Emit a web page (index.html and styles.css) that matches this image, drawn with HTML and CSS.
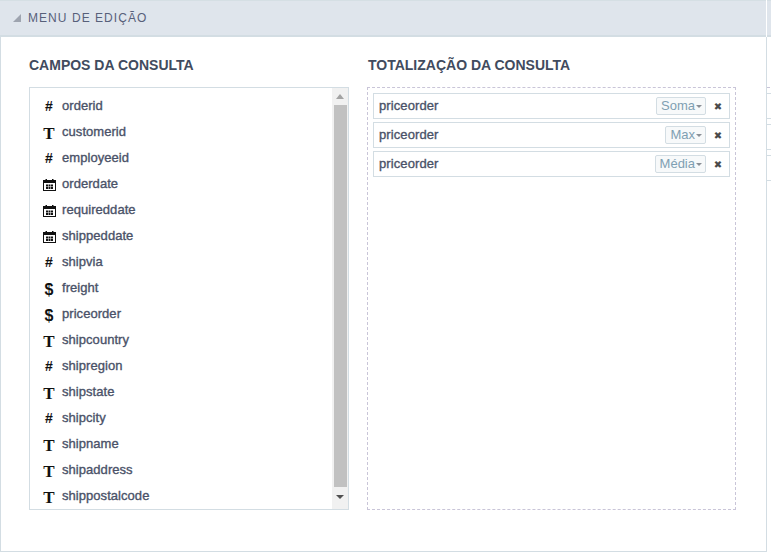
FILE: index.html
```html
<!DOCTYPE html>
<html lang="pt">
<head>
    <meta charset="UTF-8">
    <meta name="viewport" content="width=device-width, initial-scale=1.0">
    <title>Menu de Edição</title>
    <link rel="stylesheet" href="styles.css">
</head>
<body>
    <svg class="sprites" width="0" height="0">
        <symbol id="cal" viewBox="0 0 13 12">
            <path d="M0 1h2.500V0h1.500v1h5V0h1.500v1H13v11H0zM1 4v7h11V4z" fill="#111"/>
            <path d="M3 5.500h2v2H3zM5.500 5.500h2v2h-2zM8 5.500h2v2H8zM3 8h2v2H3zM5.500 8h2v2h-2zM8 8h2v2H8z" fill="#111"/>
        </symbol>
    </svg>

    <!-- Header bar -->
    <div class="menu-bar">
        <div class="menu-title"><span class="corner"></span>MENU DE EDIÇÃO</div>
        <div class="menu-rest"></div>
    </div>

    <div class="stage">
        <div class="panel">
            <!-- Fields -->
            <div class="col col-fields">
                <h2>CAMPOS DA CONSULTA</h2>
                <div class="list-box">
                    <ul class="fields">
                        <li><span class="ico ico-num">#</span>orderid</li>
                        <li><span class="ico ico-text">T</span>customerid</li>
                        <li><span class="ico ico-num">#</span>employeeid</li>
                        <li><svg class="ico-cal"><use href="#cal"/></svg>orderdate</li>
                        <li><svg class="ico-cal"><use href="#cal"/></svg>requireddate</li>
                        <li><svg class="ico-cal"><use href="#cal"/></svg>shippeddate</li>
                        <li><span class="ico ico-num">#</span>shipvia</li>
                        <li><span class="ico ico-money">$</span>freight</li>
                        <li><span class="ico ico-money">$</span>priceorder</li>
                        <li><span class="ico ico-text">T</span>shipcountry</li>
                        <li><span class="ico ico-num">#</span>shipregion</li>
                        <li><span class="ico ico-text">T</span>shipstate</li>
                        <li><span class="ico ico-num">#</span>shipcity</li>
                        <li><span class="ico ico-text">T</span>shipname</li>
                        <li><span class="ico ico-text">T</span>shipaddress</li>
                        <li><span class="ico ico-text">T</span>shippostalcode</li>
                    </ul>
                    <div class="scrollbar">
                        <span class="arrow arrow-up"></span>
                        <span class="thumb"></span>
                        <span class="arrow arrow-down"></span>
                    </div>
                </div>
            </div>

            <!-- Totals -->
            <div class="col col-totals">
                <h2>TOTALIZAÇÃO DA CONSULTA</h2>
                <div class="drop-box">
                    <div class="total-row">
                        <span class="total-name">priceorder</span>
                        <span class="pick">Soma<i class="caret"></i></span>
                        <span class="remove">✖</span>
                    </div>
                    <div class="total-row">
                        <span class="total-name">priceorder</span>
                        <span class="pick">Max<i class="caret"></i></span>
                        <span class="remove">✖</span>
                    </div>
                    <div class="total-row">
                        <span class="total-name">priceorder</span>
                        <span class="pick">Média<i class="caret"></i></span>
                        <span class="remove">✖</span>
                    </div>
                </div>
            </div>
        </div>

        <!-- Start of the next panel, cut off by the window -->
        <div class="next-panel">
            <i class="tick tick-dash"></i>
            <i class="tick tick-a"></i>
            <i class="tick tick-b"></i>
            <i class="tick tick-a"></i>
            <i class="tick tick-b"></i>
            <i class="tick tick-a"></i>
            <i class="tick tick-b"></i>
        </div>
    </div>
</body>
</html>
```

FILE: styles.css
```css
html, body {
    margin: 0;
    padding: 0;
    background: #ffffff;
    overflow: hidden;
}

body {
    width: 771px;
    height: 553px;
    font-family: "Liberation Sans", Arial, sans-serif;
    color: #4a5268;
}

.sprites {
    display: block;
}

.menu-bar {
    display: flex;
    height: 37px;
}

.menu-title {
    display: flex;
    align-items: center;
    width: 766px;
    box-sizing: border-box;
    padding-left: 13px;
    padding-bottom: 1px;
    background: #dfe5ec;
    border-top: 1px solid #d5dfe4;
    border-bottom: 2px solid #d3dde3;
    font-size: 12px;
    letter-spacing: 1.05px;
    color: #57607a;
}

.corner {
    width: 0;
    height: 0;
    margin-right: 7px;
    border-left: 8px solid transparent;
    border-bottom: 8px solid #9ea4af;
}

.menu-rest {
    width: 4px;
    margin-left: 1px;
    background: #dfe5ec;
    border-top: 1px solid #d5dfe4;
    border-bottom: 2px solid #d3dde3;
    box-sizing: border-box;
}

.stage {
    display: flex;
    height: 515px;
}

.panel {
    display: flex;
    width: 767px;
    height: 515px;
    box-sizing: border-box;
    padding-left: 28px;
    gap: 18px;
    border-left: 1px solid #d3dde3;
    border-right: 1px solid #d3dde3;
    border-bottom: 1px solid #d3dde3;
}

.next-panel {
    width: 4px;
    padding-top: 50px;
}

.tick {
    display: block;
    height: 1px;
    background: #d3dde3;
}

.tick-dash {
    background: #c9c5d8;
    width: 3px;
}

.tick-a {
    margin-top: 5px;
}

.tick-b {
    margin-top: 24px;
}

h2 {
    margin: 20px 0 14px;
    height: 16px;
    font-size: 14px;
    line-height: 16px;
    font-weight: bold;
    color: #414b5e;
}

.col-fields {
    width: 320px;
}

.col-totals {
    width: 369px;
}

.col-totals h2 {
    padding-left: 1px;
}

.list-box {
    display: flex;
    height: 423px;
    box-sizing: border-box;
    border: 1px solid #d3dde3;
}

.fields {
    flex: 1;
    margin: 0;
    padding: 5px 0 0;
    list-style: none;
}

.fields li {
    display: flex;
    align-items: center;
    height: 26px;
    box-sizing: border-box;
    padding-bottom: 2px;
    font-size: 13px;
    letter-spacing: 0.05px;
    color: #4a5268;
    -webkit-text-stroke: 0.35px #4a5268;
}

.ico, .ico-cal {
    flex: none;
    color: #111111;
    letter-spacing: 0;
    -webkit-text-stroke: 0;
}

.ico {
    width: 32px;
    box-sizing: border-box;
    padding-left: 6px;
    text-align: center;
}

.ico-num {
    font-size: 14px;
    font-weight: bold;
    line-height: 14px;
    padding-top: 1px;
}

.ico-text {
    font-size: 17px;
    font-family: "Liberation Serif", serif;
    font-weight: bold;
    line-height: 17px;
    padding-top: 4px;
}

.ico-money {
    font-size: 16px;
    font-weight: bold;
    line-height: 16px;
    padding-top: 6px;
}

.ico-cal {
    width: 13px;
    height: 12px;
    margin: 3px 6px 0 13px;
}

.scrollbar {
    display: flex;
    flex-direction: column;
    align-items: center;
    width: 16px;
    background: #f1f1f1;
}

.thumb {
    width: 13px;
    height: 382px;
    background: #c1c1c1;
}

.arrow {
    width: 0;
    height: 0;
    border-left: 4px solid transparent;
    border-right: 4px solid transparent;
}

.arrow-up {
    margin: 6px 0 6px;
    border-bottom: 5px solid #a3a3a3;
}

.arrow-down {
    margin-top: 8px;
    border-top: 4px solid #505050;
}

.drop-box {
    height: 423px;
    box-sizing: border-box;
    padding: 5px;
    border: 1px dashed #c9c5d8;
}

.total-row {
    display: flex;
    align-items: center;
    height: 26px;
    margin-bottom: 3px;
    box-sizing: border-box;
    padding: 0 6px 0 5px;
    border: 1px solid #d3dde3;
    font-size: 13px;
    color: #4a5268;
}

.total-name {
    flex: 1;
    padding-bottom: 2px;
    letter-spacing: 0.1px;
    -webkit-text-stroke: 0.35px #4a5268;
}

.pick {
    display: flex;
    align-items: center;
    height: 18px;
    box-sizing: border-box;
    padding: 0 3px 2px 4px;
    background: #f7f9fa;
    border: 1px solid #d3dde3;
    border-radius: 2px;
    color: #7f9fb2;
}

.caret {
    width: 0;
    height: 0;
    margin: 2px 0 0 1px;
    border-left: 3px solid transparent;
    border-right: 3px solid transparent;
    border-top: 3px solid #8a8f96;
}

.remove {
    width: 10px;
    margin-left: 7px;
    font-family: "DejaVu Sans", sans-serif;
    font-size: 10px;
    text-align: center;
    color: #4a4a4a;
}
```
